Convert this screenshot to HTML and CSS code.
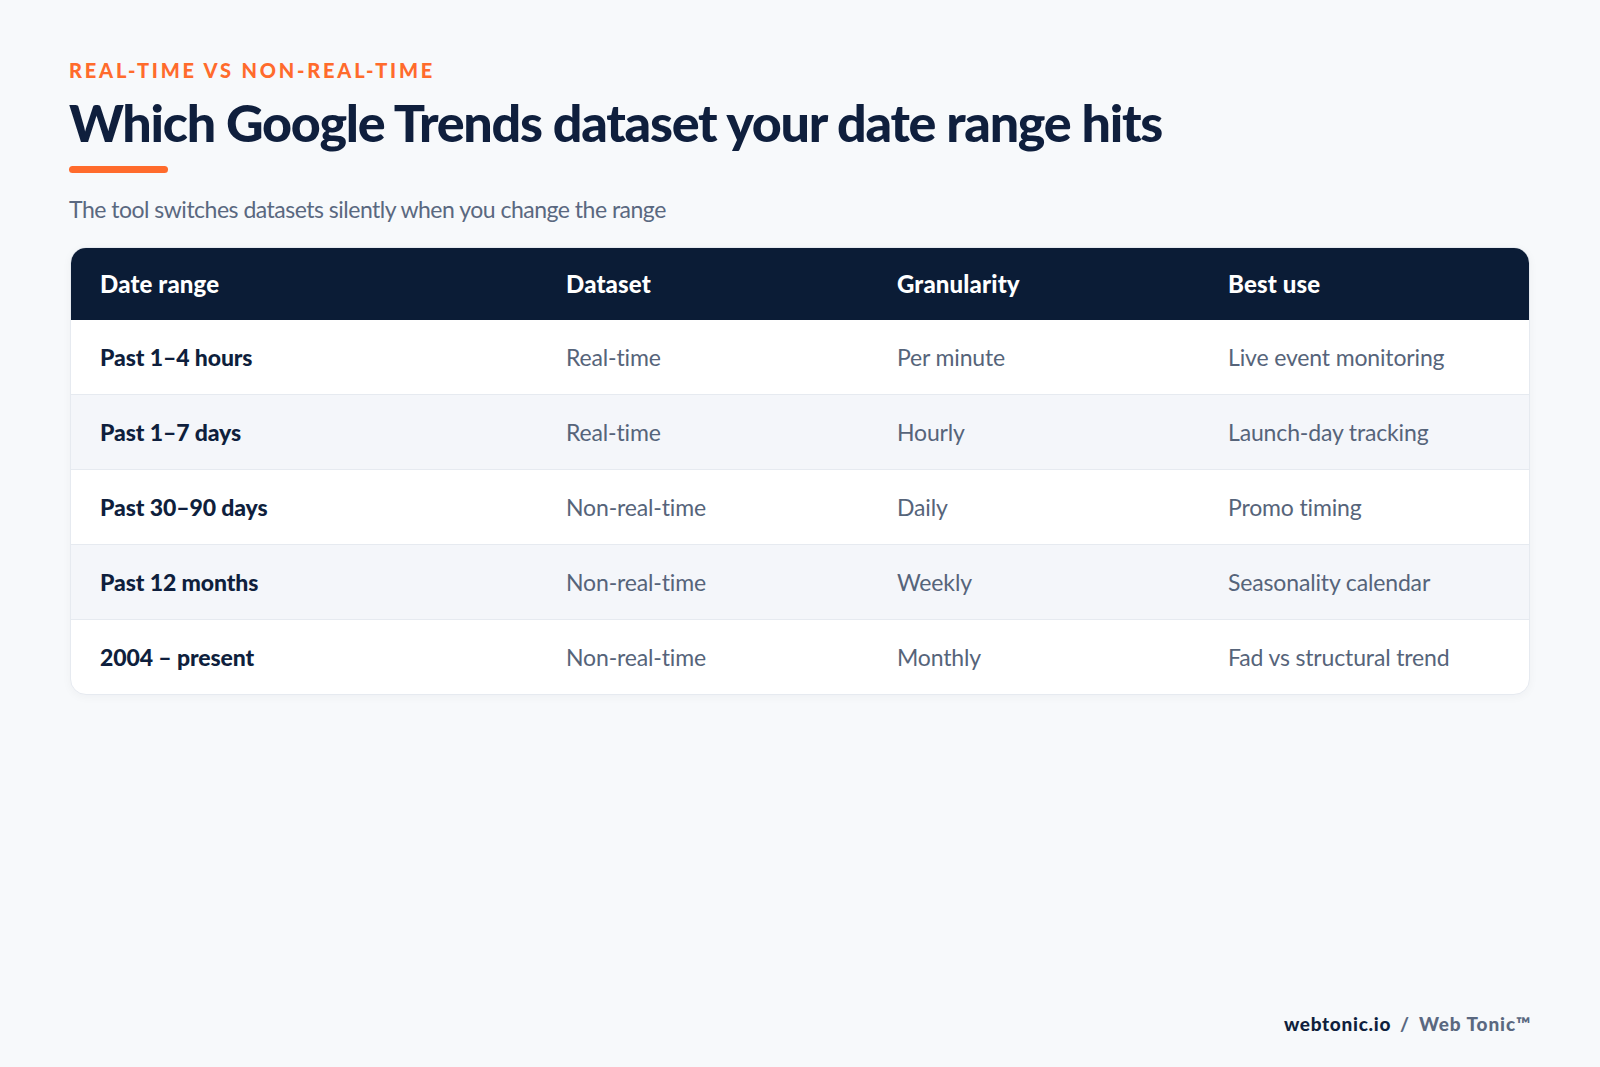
FILE: index.html
```html
<!DOCTYPE html>
<html lang="en">
<head>
    <meta charset="UTF-8">
    <title>Which Google Trends dataset your date range hits</title>
    <link rel="stylesheet" href="styles.css">
</head>
<body>
    <div class="page">
        <p class="eyebrow">REAL-TIME VS NON-REAL-TIME</p>
        <h1>Which Google Trends dataset your date range hits</h1>
        <div class="rule"></div>
        <p class="subtitle">The tool switches datasets silently when you change the range</p>

        <div class="table-card">
            <table>
                <thead>
                    <tr>
                        <th class="col-range">Date range</th>
                        <th class="col-dataset">Dataset</th>
                        <th class="col-granularity">Granularity</th>
                        <th class="col-use">Best use</th>
                    </tr>
                </thead>
                <tbody>
                    <tr>
                        <td>Past 1–4 hours</td>
                        <td>Real-time</td>
                        <td>Per minute</td>
                        <td>Live event monitoring</td>
                    </tr>
                    <tr>
                        <td>Past 1–7 days</td>
                        <td>Real-time</td>
                        <td>Hourly</td>
                        <td>Launch-day tracking</td>
                    </tr>
                    <tr>
                        <td>Past 30–90 days</td>
                        <td>Non-real-time</td>
                        <td>Daily</td>
                        <td>Promo timing</td>
                    </tr>
                    <tr>
                        <td>Past 12 months</td>
                        <td>Non-real-time</td>
                        <td>Weekly</td>
                        <td>Seasonality calendar</td>
                    </tr>
                    <tr>
                        <td>2004 – present</td>
                        <td>Non-real-time</td>
                        <td>Monthly</td>
                        <td>Fad vs structural trend</td>
                    </tr>
                </tbody>
            </table>
        </div>

        <div class="footer">
            <span class="footer-site">webtonic.io</span>
            <span class="footer-sep">/</span>
            <span class="footer-brand">Web Tonic™</span>
        </div>
    </div>
</body>
</html>
```

FILE: styles.css
```css
* {
    margin: 0;
    padding: 0;
    box-sizing: border-box;
}

body {
    width: 1600px;
    height: 1067px;
    background: #f7f9fb;
    font-family: 'Lato', 'Liberation Sans', sans-serif;
    overflow: hidden;
}

.page {
    height: 100%;
    padding: 55px 69px 0;
    display: flex;
    flex-direction: column;
}

.eyebrow {
    color: #ff6b2c;
    font-size: 20px;
    font-weight: 900;
    line-height: 30px;
    letter-spacing: 2.8px;
}

h1 {
    color: #0f1f3d;
    font-size: 52px;
    font-weight: 900;
    line-height: 66px;
    letter-spacing: -1.26px;
    margin-top: 4px;
}

.rule {
    width: 99px;
    height: 7px;
    margin-top: 11px;
    border-radius: 4px;
    background: #ff6b2c;
}

.subtitle {
    color: #5a6880;
    font-size: 23px;
    line-height: 34px;
    letter-spacing: -0.5px;
    margin-top: 19px;
}

.table-card {
    margin: 21px 1px 0;
    border: 1px solid #e6eaf0;
    border-radius: 16px;
    overflow: hidden;
    background: #fff;
    box-shadow: 0 2px 10px rgba(15, 31, 61, 0.04);
}

table {
    width: 100%;
    border-collapse: collapse;
    table-layout: fixed;
}

th {
    height: 72px;
    padding: 0 0 2px 29px;
    background: #0b1c36;
    color: #fff;
    font-size: 24px;
    font-weight: 900;
    text-align: left;
    letter-spacing: 0.15px;
}

.col-range { width: 466px; }
.col-dataset { width: 331px; }
.col-granularity { width: 331px; }

td {
    height: 74.8px;
    padding: 0 0 0 29px;
    color: #56647a;
    font-size: 23px;
    letter-spacing: -0.15px;
    border-bottom: 1px solid #e6eaf0;
}

td:first-child {
    color: #0f1f3d;
    font-weight: 900;
    letter-spacing: -0.1px;
}

tbody tr:nth-child(even) {
    background: #f4f6fa;
}

tbody tr:last-child td {
    border-bottom: none;
}

.footer {
    position: absolute;
    right: 69px;
    top: 1010px;
    font-size: 19px;
    font-weight: 900;
    line-height: 28px;
    letter-spacing: 0.9px;
    display: flex;
    gap: 9px;
}

.footer-site {
    color: #0f1f3d;
    letter-spacing: 0.7px;
}

.footer-sep,
.footer-brand { color: #5a6880; }
```
